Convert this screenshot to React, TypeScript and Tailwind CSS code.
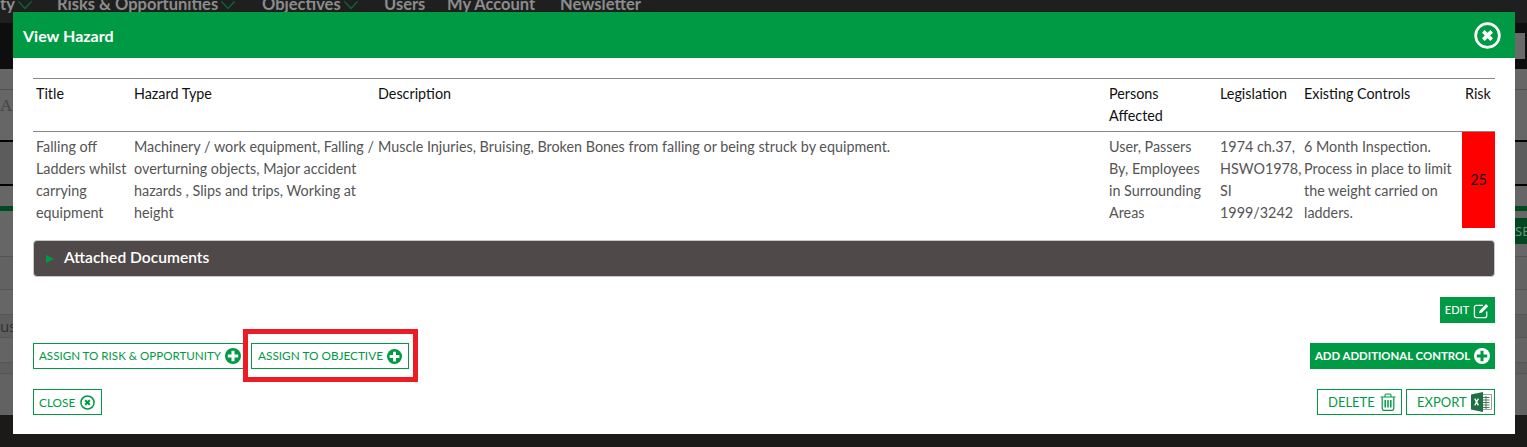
const bodyFont = "font-['Lato','Liberation_Sans',sans-serif]";

const columns = [98, 244, 731, 111, 84, 161, 33];
const headers = ["Title", "Hazard Type", "Description", "Persons Affected", "Legislation", "Existing Controls", "Risk"];
const cells = [
  "Falling off Ladders whilst carrying equipment",
  "Machinery / work equipment, Falling / overturning objects, Major accident hazards , Slips and trips, Working at height",
  "Muscle Injuries, Bruising, Broken Bones from falling or being struck by equipment.",
  "User, Passers By, Employees in Surrounding Areas",
  "1974 ch.37, HSWO1978, SI 1999/3242",
  "6 Month Inspection. Process in place to limit the weight carried on ladders.",
];

function PlusCircle({ className }: { className: string }) {
  return (
    <svg viewBox="0 0 16 16" className={className}>
      <circle cx="8" cy="8" r="8" fill="currentColor" />
      <path d="M8 2.8v10.4M2.8 8h10.4" stroke="var(--plus)" strokeWidth="3" />
    </svg>
  );
}

function CloseCircle({ className }: { className: string }) {
  return (
    <svg viewBox="0 0 26 26" fill="none" stroke="currentColor" className={className}>
      <circle cx="13" cy="13" r="11.4" strokeWidth="2.6" />
      <path d="M9 9l8 8M17 9l-8 8" strokeWidth="3.6" />
    </svg>
  );
}

function EditIcon() {
  return (
    <svg viewBox="0 0 18 18" fill="none" className="h-[17px] w-[17px] text-white">
      <path d="M14.5 10v4.5a2 2 0 0 1-2 2h-9a2 2 0 0 1-2-2v-9a2 2 0 0 1 2-2h7" stroke="currentColor" strokeWidth="1.4" />
      <path d="M7 9.2 13.8 2.2l2.3 2.3L9.2 11.4l-2.7.4z" fill="currentColor" />
    </svg>
  );
}

function TrashIcon() {
  return (
    <svg viewBox="0 0 16 18" fill="none" stroke="currentColor" className="h-[18px] w-[16px] text-[#009a44]">
      <path d="M0.5 4h15M5 4V2.2C5 1.4 5.5 1 6.2 1h3.6c.7 0 1.2.4 1.2 1.2V4" strokeWidth="1.1" />
      <path d="M2.2 4v11.6c0 1 .6 1.7 1.4 1.7h8.8c.8 0 1.4-.7 1.4-1.7V4" strokeWidth="1.2" />
      <path d="M5.2 7v7.5M8 7v7.5M10.8 7v7.5" strokeWidth="1.5" />
    </svg>
  );
}

function ExcelIcon() {
  return (
    <svg viewBox="0 0 21 20" className="h-5 w-[21px]">
      <rect x="9" y="2.5" width="11.5" height="15" fill="#fff" stroke="#7f8f86" strokeWidth="0.8" />
      <path d="M11.5 5.5h7M11.5 8h7M11.5 10.5h7M11.5 13h7M11.5 15.5h7M15 4v13" stroke="#4b7a5e" strokeWidth="1" />
      <path d="M0 2.4 12 0v20L0 17.6z" fill="#1f6f43" />
      <path d="M3.8 6.6l3.6 6.8M7.4 6.6l-3.6 6.8" stroke="#fff" strokeWidth="1.3" />
    </svg>
  );
}

function NavChevron() {
  return (
    <svg viewBox="0 0 14 8" fill="none" stroke="#0a6b35" strokeWidth="1.2" className="ml-[3px] mt-[1px] h-[8px] w-[14px]">
      <path d="M0.5 0.5 7 7.5 13.5 0.5" />
    </svg>
  );
}

function OutlineButton({ label, children, className = "" }: { label: string; children: React.ReactNode; className?: string }) {
  return (
    <button
      type="button"
      className={`flex h-[26px] items-center whitespace-nowrap border border-[#009a44] bg-white text-[#009a44] ${className}`}
    >
      {label}
      {children}
    </button>
  );
}

function Backdrop() {
  return (
    <div className="flex h-[447px] flex-col overflow-hidden bg-[#1b1a18]">
      <div className={`flex h-[23px] bg-[#1f1f1f] text-[16.5px] font-bold leading-[14px] text-[#8c8c8c] ${bodyFont}`}>
        <span className="flex w-[57px]">
          <span className="-mt-[3px]">ty</span>
          <NavChevron />
        </span>
        <span className="flex w-[205px]">
          <span className="-mt-[3px]">Risks &amp; Opportunities</span>
          <NavChevron />
        </span>
        <span className="flex w-[122px]">
          <span className="-mt-[3px]">Objectives</span>
          <NavChevron />
        </span>
        <span className="-mt-[3px] w-[63px]">Users</span>
        <span className="-mt-[3px] w-[113px]">My Account</span>
        <span className="-mt-[3px]">Newsletter</span>
      </div>
      <div className="flex h-[46px] items-center justify-end bg-[#0e0e0e] pr-[2px]">
        <div className="h-[26px] w-[40px] bg-[#6a6a6a]" />
      </div>
      <div className="flex h-[71px] flex-col bg-[#666666]">
        <div className="mt-[20px] h-px bg-[#505050]" />
        <div className="mt-[3px] font-['Liberation_Serif',serif] text-[17px] text-[#444444]">As</div>
      </div>
      <div className="h-[2px] bg-black" />
      <div className="h-[42px] bg-[#5c5c5c]" />
      <div className="h-[2px] bg-black" />
      <div className="h-[20px] bg-[#666666]" />
      <div className="h-[5px] bg-[#004a20]" />
      <div className="h-[7px] bg-[#666666]" />
      <div className="flex h-[26px] justify-end bg-[#666666]">
        <div className="w-[12px] overflow-hidden whitespace-nowrap bg-[#00471f] text-[13px] leading-[26px] text-[#6f8f7c]">SE</div>
      </div>
      <div className="h-[12px] bg-[#666666]" />
      <div className="h-[33px] border-t border-[#555555] bg-[#626262]" />
      <div className="h-[25px] border-t border-[#555555] bg-[#666666]" />
      <div className="h-[23px] border-t border-[#555555] bg-[#5e5e5e] text-[15px] leading-[23px] text-[#333333]">us</div>
      <div className="h-[25px] border-t border-[#555555] bg-[#646464]" />
      <div className="h-[11px] border-t border-[#555555] bg-[#5e5e5e]" />
      <div className="h-[42px] border-t border-[#555555] bg-[#626262]" />
    </div>
  );
}

export default function App() {
  return (
    <div className="relative h-[447px] w-[1527px] overflow-hidden">
      <Backdrop />
      <div className={`absolute left-[13px] top-[12px] h-[422px] w-[1502px] bg-white ${bodyFont}`}>
        <div className="flex h-[46px] items-center justify-between bg-[#009a44] pl-[10px] pr-[14px]">
          <h2 className="pt-[1px] text-[16px] font-bold text-white">View Hazard</h2>
          <CloseCircle className="h-[27px] w-[27px] text-white" />
        </div>

        <div className="px-[20px] pt-[20px]">
          <table className="w-[1462px] table-fixed border-collapse text-[14.35px] leading-[22px]">
            <colgroup>
              {columns.map((w, i) => (
                <col key={i} style={{ width: w }} />
              ))}
            </colgroup>
            <thead>
              <tr className="border-y border-[#888888]">
                {headers.map((h, i) => (
                  <th
                    key={h}
                    className={`pb-[4px] pl-[3px] pt-[4px] text-left align-top font-normal text-[#111111] ${i === 3 ? "pr-[8px]" : "pr-0"}`}
                  >
                    {h}
                  </th>
                ))}
              </tr>
            </thead>
            <tbody>
              <tr>
                {cells.map((c, i) => (
                  <td
                    key={i}
                    className={`pb-[4px] pl-[3px] pt-[4px] align-top text-[#555555] ${i === 3 ? "pr-[8px]" : "pr-0"}`}
                  >
                    {c}
                  </td>
                ))}
                <td className="bg-[#ff0000] text-center align-middle text-[#111111]">25</td>
              </tr>
            </tbody>
          </table>

          <div className="mt-[12px] flex h-[37px] items-center rounded-[4px] border border-[#c8c8c8] bg-[#4f4a49] pb-[2px] pl-[12px] text-[15.6px] font-semibold text-white">
            <span className="mt-[2px] h-0 w-0 border-y-[4px] border-l-[8px] border-y-transparent border-l-[#009a44]" />
            <span className="ml-[10px]">Attached Documents</span>
          </div>

          <div className="mt-[20px] flex justify-end">
            <button
              type="button"
              className="flex h-[26px] w-[55px] items-center justify-center gap-[4px] bg-[#009a44] text-[11px] font-medium text-white"
            >
              EDIT
              <EditIcon />
            </button>
          </div>

          <div className="mt-[20px] flex justify-between text-[11.8px]">
            <div className="flex gap-[4px]">
              <OutlineButton label="ASSIGN TO RISK & OPPORTUNITY" className="w-[214px] pl-[5px] text-[11.6px] [--plus:#fff]">
                <PlusCircle className="ml-[4px] h-[16px] w-[16px]" />
              </OutlineButton>
              <div className="relative">
                <OutlineButton label="ASSIGN TO OBJECTIVE" className="w-[158px] pl-[6px] [--plus:#fff]">
                  <PlusCircle className="ml-[4px] h-[15px] w-[15px]" />
                </OutlineButton>
                <div className="absolute bottom-[-13px] left-[-8px] right-[-9px] top-[-14px] border-[5px] border-[#ed1c24]" />
              </div>
            </div>
            <button
              type="button"
              className="flex h-[26px] w-[185px] items-center justify-center gap-[4px] whitespace-nowrap bg-[#009a44] text-[11.4px] font-bold text-white [--plus:#009a44]"
            >
              ADD ADDITIONAL CONTROL
              <PlusCircle className="h-[16px] w-[16px]" />
            </button>
          </div>

          <div className="mt-[20px] flex justify-between">
            <OutlineButton label="CLOSE" className="w-[69px] pl-[5px] pt-[1px] text-[11.8px]">
              <CloseCircle className="ml-[5px] h-[15px] w-[15px]" />
            </OutlineButton>
            <div className="flex gap-[4px] text-[13px]">
              <OutlineButton label="DELETE" className="w-[85px] pl-[10px] pt-[2px]">
                <span className="-mt-[2px] ml-[5px]">
                  <TrashIcon />
                </span>
              </OutlineButton>
              <OutlineButton label="EXPORT" className="w-[89px] pl-[10px] pt-[2px]">
                <span className="-mt-[2px] ml-[4px]">
                  <ExcelIcon />
                </span>
              </OutlineButton>
            </div>
          </div>
        </div>
      </div>
    </div>
  );
}
